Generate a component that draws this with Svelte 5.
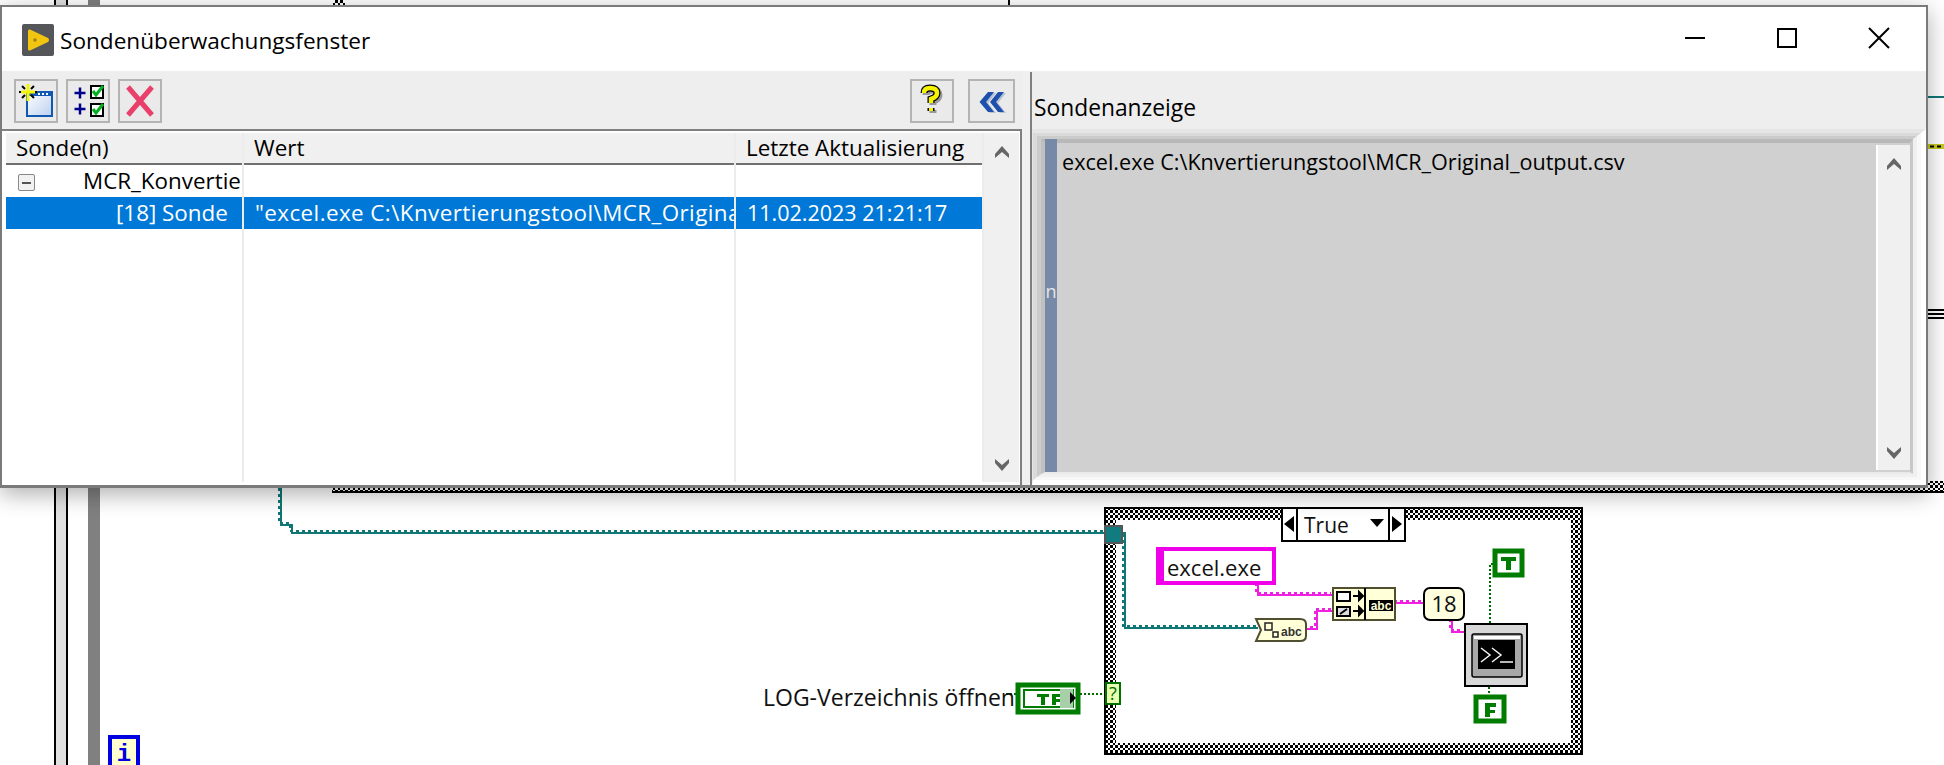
<script>
  const teal = ["M281 484V525H292V533H1105", "M1122 533H1125V628H1258"];
  const pink = ["M1258 585V595H1333", "M1306 629H1317V611H1333", "M1396 603H1423", "M1452 621V632H1464"];
  const green = ["M1493 564H1490V623", "M1489 687V695", "M1080 694H1105", "M1006 694H1016"];
</script>

<div class="page">
  <svg class="canvas" width="1944" height="765" viewBox="0 0 1944 765">
    <defs>
      <pattern id="chk" width="5" height="5" patternUnits="userSpaceOnUse">
        <rect width="5" height="5" fill="#fff" />
        <rect width="3" height="3" fill="#000" />
        <rect x="3" y="3" width="2" height="2" fill="#000" />
      </pattern>
    </defs>

    <!-- loop frame on the left -->
    <rect x="54" y="0" width="14" height="765" fill="#e0e0e0" />
    <rect x="54" y="0" width="2" height="765" fill="#000" />
    <rect x="66" y="0" width="2" height="765" fill="#000" />
    <rect x="88" y="0" width="12" height="765" fill="#808080" />
    <rect x="110" y="737" width="28" height="30" fill="#ffffd0" stroke="#0000e0" stroke-width="4" />
    <text x="124" y="761" class="itext">i</text>

    <!-- bits peeking over and beside the window -->
    <rect x="333" y="0" width="12" height="5" fill="url(#chk)" />
    <rect x="1008" y="0" width="2" height="6" fill="#000" />
    <rect x="1928" y="96" width="16" height="2" fill="#107676" />
    <rect x="1928" y="144" width="16" height="5" fill="#c8c820" />
    <path d="M1930 146.500h4m3 0h4" stroke="#000" stroke-width="2" fill="none" />
    <rect x="1928" y="309" width="16" height="2" fill="#000" />
    <rect x="1928" y="313" width="16" height="2" fill="#000" />
    <rect x="1928" y="317" width="16" height="2" fill="#000" />
    <rect x="332" y="481" width="1612" height="12" fill="url(#chk)" />
    <rect x="332" y="491" width="1612" height="2" fill="#000" />

    <!-- wires -->
    {#each teal as d}
      <path {d} fill="none" stroke="#107676" stroke-width="2" />
      <path {d} fill="none" stroke="#107676" stroke-width="2" stroke-dasharray="3 3" transform="translate(-2 -2)" />
    {/each}
    {#each pink as d}
      <path {d} fill="none" stroke="#f020e0" stroke-width="2" />
      <path {d} fill="none" stroke="#f020e0" stroke-width="2" stroke-dasharray="3 3" transform="translate(-2 -2)" />
    {/each}
    {#each green as d}
      <path {d} fill="none" stroke="#006a00" stroke-width="2" stroke-dasharray="2 2" />
    {/each}

    <!-- case structure -->
    <path d="M1104 507H1583V755H1104ZM1116 520V743H1571V520Z" fill="url(#chk)" fill-rule="evenodd" />
    <rect x="1105" y="508" width="477" height="246" fill="none" stroke="#000" stroke-width="2" />
    <rect x="1282" y="508" width="123" height="33" fill="#fff" stroke="#000" stroke-width="2" />
    <path d="M1297 508V541M1389 508V541" stroke="#000" stroke-width="2" />
    <path d="M1284 524L1294 516V532Z M1392 516L1402 524L1392 532Z M1370 519H1384L1377 527Z" fill="#000" />
    <text x="1304" y="533" class="lbl">True</text>

    <!-- tunnels -->
    <rect x="1105" y="526" width="17" height="17" fill="#107c80" stroke="#555" stroke-width="2" />
    <rect x="1106" y="683" width="14" height="21" fill="#e8ffb0" stroke="#007000" stroke-width="2" />
    <text x="1113" y="700" class="q">?</text>

    <!-- string constant -->
    <path d="M1156 547H1276V585H1156ZM1164 551V581H1272V551Z" fill="#f000e8" fill-rule="evenodd" />
    <rect x="1164" y="551" width="108" height="30" fill="#fff" />
    <text x="1167" y="576" class="lbl exe">excel.exe</text>

    <!-- path to string -->
    <path d="M1256 619H1300Q1306 619 1306 624V636Q1306 641 1300 641H1256L1261 630Z" fill="#ffffd8" stroke="#505030" stroke-width="2" />
    <rect x="1265" y="623" width="7" height="7" fill="none" stroke="#222" stroke-width="1.500" />
    <rect x="1273" y="632" width="5" height="5" fill="none" stroke="#222" stroke-width="1.500" />
    <text x="1281" y="636" class="mini">abc</text>

    <!-- concatenate -->
    <rect x="1333" y="588" width="62" height="32" fill="#ffffd8" stroke="#505030" stroke-width="2" />
    <path d="M1365 588V620" stroke="#000" stroke-width="2" />
    <rect x="1337" y="592" width="13" height="9" fill="#fff" stroke="#000" stroke-width="2" />
    <rect x="1337" y="607" width="13" height="9" fill="#ddd" stroke="#000" stroke-width="2" />
    <path d="M1340 614L1347 609" stroke="#000" stroke-width="2" />
    <path d="M1353 596H1359M1359 592L1363 596L1359 600Z M1353 611H1359M1359 607L1363 611L1359 615Z" stroke="#000" stroke-width="2" fill="#000" />
    <rect x="1369" y="600" width="24" height="11" fill="#000" />
    <text x="1381" y="610" class="mini inv">abc</text>

    <!-- numeric constant -->
    <rect x="1424" y="588" width="40" height="32" rx="6" fill="#ffffe0" stroke="#000" stroke-width="2" />
    <text x="1444" y="612" class="lbl mid">18</text>

    <!-- system exec -->
    <rect x="1465" y="624" width="62" height="62" fill="#d8d8d8" stroke="#000" stroke-width="2" />
    <rect x="1472" y="634" width="50" height="43" rx="2" fill="#a8a8a8" stroke="#000" stroke-width="1.500" />
    <rect x="1474" y="636" width="46" height="3" fill="#fff" />
    <rect x="1478" y="640" width="37" height="29" fill="#000" />
    <path d="M1481 648L1490 655L1481 662M1492 648L1501 655L1492 662M1500 662H1513" fill="none" stroke="#f4f4f4" stroke-width="1.500" />

    <!-- boolean constants -->
    <rect x="1495" y="551" width="27" height="24" fill="#fff" stroke="#007c00" stroke-width="5" />
    <path d="M1501 557H1516V561H1511V570H1506V561H1501Z" fill="#007c00" />
    <rect x="1476" y="697" width="28" height="24" fill="#fff" stroke="#007c00" stroke-width="5" />
    <path d="M1485 703H1496V707H1490V710H1495V713H1490V717H1485Z" fill="#007c00" />

    <!-- boolean control -->
    <rect x="1018" y="685" width="60" height="27" fill="#fff" stroke="#007c00" stroke-width="5" />
    <rect x="1024" y="690" width="49" height="17" fill="#fff" stroke="#007c00" stroke-width="2" />
    <rect x="1060" y="689" width="13" height="19" fill="#a8d0a8" />
    <path d="M1037 694H1049V697H1045V705H1041V697H1037ZM1052 694H1060V697H1056V699H1060V702H1056V705H1052Z" fill="#007c00" />
    <path d="M1070 692L1076 698L1070 704Z" fill="#000" />
    <text x="763" y="706" class="lbl log">LOG-Verzeichnis öffnen</text>
  </svg>

  <section class="window">
    <header class="titlebar">
      <div class="title">
        <svg width="32" height="32" viewBox="0 0 32 32">
          <rect width="32" height="32" rx="2" fill="#55565a" />
          <path d="M6 7Q6 5 8 5.500L26 14Q28 16 26 18L8 26.500Q6 27 6 25Z" fill="#f2c511" />
          <path d="M11 16h4M13 14v4" stroke="#a88408" stroke-width="1.500" />
        </svg>
        <span>Sondenüberwachungsfenster</span>
      </div>
      <div class="controls">
        <div class="ctl"><svg width="22" height="22" viewBox="0 0 22 22"><path d="M1 11H21" stroke="#000" stroke-width="2" /></svg></div>
        <div class="ctl"><svg width="22" height="22" viewBox="0 0 22 22"><rect x="2" y="2" width="18" height="18" fill="none" stroke="#000" stroke-width="2" /></svg></div>
        <div class="ctl"><svg width="22" height="22" viewBox="0 0 22 22"><path d="M1 1L21 21M21 1L1 21" stroke="#000" stroke-width="2" /></svg></div>
      </div>
    </header>

    <div class="content">
      <div class="leftpane">
        <div class="toolbar">
          <div class="tools">
            <button class="btn">
              <svg width="40" height="40" viewBox="0 0 40 40">
                <defs><linearGradient id="winfill" x1="0" y1="0" x2="1" y2="1"><stop offset="0" stop-color="#fff" /><stop offset="1" stop-color="#bcd0f0" /></linearGradient></defs>
                <rect x="11" y="11" width="25" height="24" fill="url(#winfill)" stroke="#1058b0" stroke-width="2" />
                <rect x="11" y="11" width="25" height="4" fill="#1058b0" />
                <path d="M22 13h2m2 0h2m2 0h2" stroke="#fff" stroke-width="2" />
                <path d="M6 5L9 8M18 5L15 8M6 17L9 14M18 17L15 14M3 11H8M16 11H21" stroke="#000" stroke-width="2" />
                <path d="M12 3V20M5 11H19" stroke="#f4f400" stroke-width="3" />
              </svg>
            </button>
            <button class="btn">
              <svg width="40" height="40" viewBox="0 0 40 40">
                <path d="M6.500 12H17.500M12 6.500V17.500M6.500 28H17.500M12 22.500V33.500" stroke="#00008a" stroke-width="2.500" />
                <rect x="23" y="5" width="12" height="12" fill="#fff" stroke="#000" stroke-width="2" />
                <rect x="23" y="23" width="12" height="12" fill="#fff" stroke="#000" stroke-width="2" />
                <path d="M25 10L28 14L35 5M25 28L28 32L35 23" fill="none" stroke="#00b020" stroke-width="3" />
              </svg>
            </button>
            <button class="btn">
              <svg width="40" height="40" viewBox="0 0 40 40">
                <path d="M8 6L32 34M32 6L8 34" stroke="#e8406a" stroke-width="5" />
              </svg>
            </button>
          </div>
          <div class="tools">
            <button class="btn">
              <svg width="40" height="40" viewBox="0 0 40 40">
                <g fill="none" transform="translate(2 2)" stroke="#999">
                  <path d="M12 12Q12 7 18 7Q25 7 25 12Q25 16 19 18V22" stroke-width="7" />
                  <path d="M19 27V30" stroke-width="7" />
                </g>
                <g fill="none" stroke="#000">
                  <path d="M12 12Q12 7 18 7Q25 7 25 12Q25 16 19 18V22" stroke-width="7" />
                  <path d="M19 27V30" stroke-width="7" />
                </g>
                <g fill="none" stroke="#f4f400">
                  <path d="M12 12Q12 7 18 7Q25 7 25 12Q25 16 19 18V22" stroke-width="4.500" />
                  <path d="M19 27V30" stroke-width="4" />
                </g>
              </svg>
            </button>
            <button class="btn wide">
              <svg width="40" height="40" viewBox="0 0 40 40">
                <path d="M7.500 21L16 11H22L14 21L22 31H16ZM18 21L26 11H32L24 21L32 31H26Z" fill="#b4c0d4" transform="translate(2 1)" />
                <path d="M7.500 21L16 11H22L14 21L22 31H16ZM18 21L26 11H32L24 21L32 31H26Z" fill="#1d50ac" />
              </svg>
            </button>
          </div>
        </div>

        <div class="tablewrap">
          <div class="grid">
            <div class="th first">Sonde(n)</div>
            <div class="th">Wert</div>
            <div class="th">Letzte Aktualisierung</div>
            <div class="scroll">
              <svg width="14" height="12" viewBox="0 0 14 12"><path d="M0 8L7 0L14 8V12L7 6L0 12Z" fill="#666" /></svg>
              <svg width="14" height="12" viewBox="0 0 14 12"><path d="M0 0L7 6L14 0V4L7 12L0 4Z" fill="#666" /></svg>
            </div>

            <div class="td tree">
              <span class="toggle"><i></i></span>
              <span>MCR_Konvertierungstool</span>
            </div>
            <div class="td"></div>
            <div class="td"></div>

            <div class="td sel probe">[18] Sonde</div>
            <div class="td sel val">"excel.exe C:\Knvertierungstool\MCR_Original_output.csv"</div>
            <div class="td sel val date">11.02.2023 21:21:17</div>

            <div class="td"></div>
            <div class="td"></div>
            <div class="td"></div>
          </div>
        </div>
      </div>

      <div class="splitter"></div>

      <div class="rightpane">
        <div class="paneltitle">Sondenanzeige</div>
        <div class="bevel b1"><div class="bevel b2"><div class="bevel b3"><div class="bevel b4">
          <div class="display">
            <div class="strip">n</div>
            <div class="strtext">excel.exe C:\Knvertierungstool\MCR_Original_output.csv</div>
            <div class="scroll inner">
              <svg width="14" height="12" viewBox="0 0 14 12"><path d="M0 8L7 0L14 8V12L7 6L0 12Z" fill="#666" /></svg>
              <svg width="14" height="12" viewBox="0 0 14 12"><path d="M0 0L7 6L14 0V4L7 12L0 4Z" fill="#666" /></svg>
            </div>
          </div>
        </div></div></div></div>
      </div>
    </div>
  </section>
</div>

<style>
  :global(body) {
    margin: 0;
    background: #fff;
  }
  .page {
    position: relative;
    width: 1944px;
    height: 765px;
    overflow: hidden;
    background: #fff;
    font-family: "Open Sans", "Noto Sans", sans-serif;
    color: #000;
  }
  .canvas {
    position: absolute;
    left: 0;
    top: 0;
  }
  .lbl {
    font: 21px "Open Sans", sans-serif;
    fill: #111;
  }
  .exe {
    font-size: 22px;
  }
  .log {
    font-size: 23px;
  }
  .lbl.mid {
    text-anchor: middle;
    font-size: 22px;
  }
  .mini {
    font: bold 12px "Liberation Sans", sans-serif;
    fill: #333;
  }
  .mini.inv {
    fill: #ffffd8;
    text-anchor: middle;
  }
  .itext {
    font: bold 24px "Liberation Mono", monospace;
    fill: #0000e0;
    text-anchor: middle;
  }
  .q {
    font: 18px "Open Sans", sans-serif;
    fill: #006a00;
    text-anchor: middle;
  }

  .window {
    position: absolute;
    left: 0;
    top: 5px;
    width: 1928px;
    height: 483px;
    box-sizing: border-box;
    border: 2px solid #7a7a7a;
    border-bottom-width: 3px;
    background: #f0f0f0;
    display: flex;
    flex-direction: column;
    box-shadow: 0 6px 22px rgba(0, 0, 0, 0.32);
  }
  .titlebar {
    height: 64px;
    flex: none;
    background: #fff;
    display: flex;
    justify-content: space-between;
    align-items: center;
    padding-left: 20px;
  }
  .title {
    display: flex;
    align-items: center;
    gap: 6px;
    font-size: 22.600px;
    margin-top: 2px;
  }
  .controls {
    display: flex;
    margin-right: 1px;
    align-self: stretch;
  }
  .ctl {
    width: 92px;
    display: flex;
    align-items: center;
    justify-content: center;
    margin-top: -3px;
  }
  .content {
    flex: 1;
    display: flex;
    min-height: 0;
  }
  .leftpane {
    width: 1020px;
    flex: none;
    display: flex;
    flex-direction: column;
  }
  .toolbar {
    height: 58px;
    flex: none;
    box-sizing: border-box;
    background: #eee;
    padding: 8px 7px 6px 12px;
    display: flex;
    justify-content: space-between;
  }
  .tools {
    display: flex;
    gap: 8px;
  }
  .tools + .tools {
    gap: 14px;
  }
  .btn {
    width: 44px;
    height: 44px;
    padding: 0;
    box-sizing: border-box;
    border: 2px solid #b4b4b4;
    background: #eaeaea;
    display: flex;
    align-items: center;
    justify-content: center;
  }
  .btn.wide {
    width: 47px;
  }
  .tablewrap {
    flex: 1;
    min-height: 0;
    box-sizing: border-box;
    background: #fff;
    border-top: 2px solid #808080;
    border-right: 2px solid #808080;
    padding: 2px 1px 3px 4px;
  }
  .grid {
    height: 100%;
    display: grid;
    grid-template-columns: 236px 490px 246px 1fr;
    grid-template-rows: 32px 32px 32px 1fr;
    column-gap: 2px;
    background: #ececec;
    font-size: 22.400px;
    line-height: 30px;
    white-space: nowrap;
  }
  .th {
    background: #f0f0f0;
    box-sizing: border-box;
    border-bottom: 2px solid #707070;
    padding-left: 10px;
    overflow: hidden;
  }
  .th.first {
    box-shadow: inset 2px 0 0 #f0f0f0;
  }
  .td {
    background: #fff;
    min-width: 0;
    overflow: hidden;
    box-sizing: border-box;
  }
  .tree {
    display: flex;
    align-items: center;
    padding-left: 12px;
    padding-right: 2px;
    overflow: hidden;
  }
  .toggle {
    width: 17px;
    height: 17px;
    flex: none;
    box-sizing: border-box;
    border: 1px solid #888;
    border-radius: 2px;
    background: #f2f2f2;
    margin-right: 48px;
    margin-top: 3px;
    display: flex;
    align-items: center;
    justify-content: center;
  }
  .toggle i {
    width: 9px;
    height: 2px;
    background: #555;
  }
  .sel {
    background: #0078d7;
    color: #fff;
    line-height: 31px;
  }
  .probe {
    padding-left: 110px;
  }
  .val {
    padding-left: 11px;
    font-size: 22.400px;
    letter-spacing: 0.420px;
  }
  .date {
    font-size: 21.500px;
    letter-spacing: 0;
  }
  .scroll {
    grid-column: 4;
    grid-row: 1 / 5;
    background: #f0f0f0;
    display: flex;
    flex-direction: column;
    justify-content: space-between;
    align-items: center;
    padding: 13px 0 11px;
  }
  .splitter {
    width: 8px;
    flex: none;
    background: #f0f0f0;
  }
  .rightpane {
    flex: 1;
    min-width: 0;
    display: flex;
    flex-direction: column;
    border-left: 2px solid #808080;
    margin-top: 1px;
  }
  .paneltitle {
    height: 57px;
    flex: none;
    box-sizing: border-box;
    background: #eee;
    font-size: 22.800px;
    line-height: 30px;
    padding: 21px 0 0 2px;
  }
  .bevel {
    box-sizing: border-box;
    border-style: solid;
    display: flex;
    flex: 1;
    min-width: 0;
    min-height: 0;
  }
  .b1 {
    border-width: 4px 5px 5px 1px;
    border-color: #e6e6e6 #fff #fff #e6e6e6;
  }
  .b2 {
    border-width: 3px 4px 3px 4px;
    border-color: #dadada #f8f8f8 #f8f8f8 #dadada;
  }
  .b3 {
    border-width: 3px 4px 3px 4px;
    border-color: #cbcbcb #f0f0f0 #f0f0f0 #cbcbcb;
  }
  .b4 {
    border-width: 4px 3px 2px 4px;
    border-color: #b8b8b8 #c8c8c8 #eaeaea #c0c0c0;
  }
  .display {
    flex: 1;
    min-width: 0;
    display: flex;
    background: #d0d0d0;
  }
  .strip {
    width: 12px;
    flex: none;
    margin-top: -4px;
    background: #7689a6;
    color: #e6e6e6;
    font-size: 18px;
    line-height: 20px;
    padding-top: 142px;
    box-sizing: border-box;
    text-align: center;
    position: relative;
  }
  .strtext {
    flex: 1;
    min-width: 0;
    font-size: 21.600px;
    line-height: 30px;
    padding: 4px 0 0 5px;
    white-space: nowrap;
  }
  .scroll.inner {
    width: 34px;
    flex: none;
    box-sizing: border-box;
    margin: 2px 0;
    border-left: 2px solid #fff;
    padding: 13px 0 11px;
  }
</style>
